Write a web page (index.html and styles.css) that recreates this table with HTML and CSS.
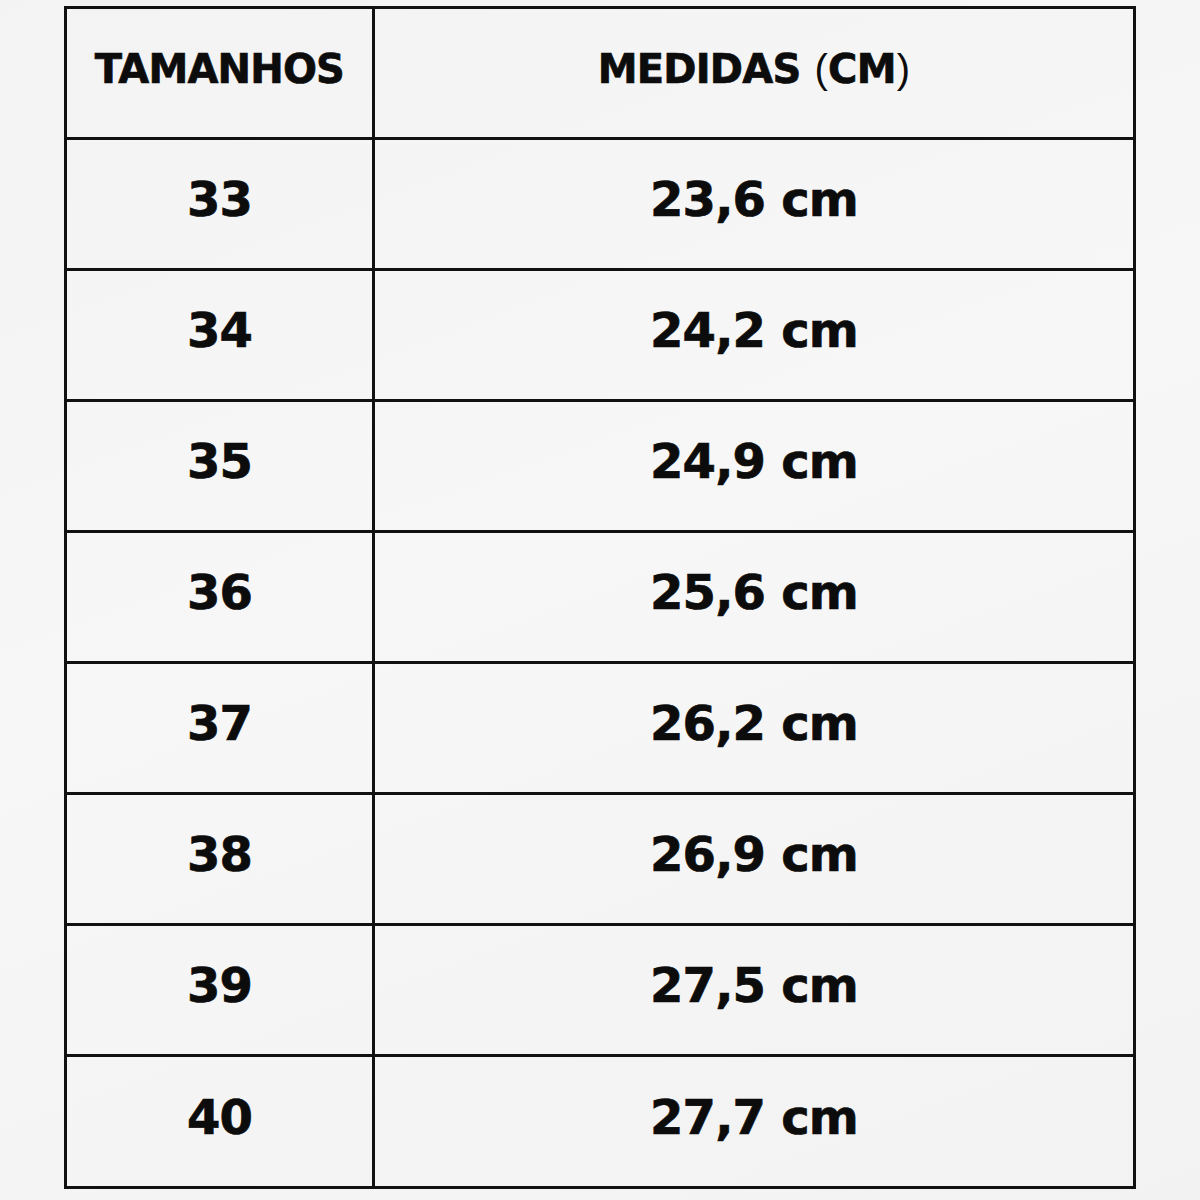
FILE: index.html
```html
<!DOCTYPE html>
<html lang="pt">
<head>
<meta charset="utf-8">
<title>Tabela de medidas</title>
<link rel="stylesheet" href="styles.css">
</head>
<body>
<div class="chart">
  <div class="cell head left"><span>TAMANHOS</span></div>
  <div class="cell head"><span>MEDIDAS <span class="paren">(</span>CM<span class="paren">)</span></span></div>
  <div class="cell left">33</div><div class="cell">23,6 cm</div>
  <div class="cell left">34</div><div class="cell">24,2 cm</div>
  <div class="cell left">35</div><div class="cell">24,9 cm</div>
  <div class="cell left">36</div><div class="cell">25,6 cm</div>
  <div class="cell left">37</div><div class="cell">26,2 cm</div>
  <div class="cell left">38</div><div class="cell">26,9 cm</div>
  <div class="cell left">39</div><div class="cell">27,5 cm</div>
  <div class="cell left last">40</div><div class="cell last">27,7 cm</div>
</div>
</body>
</html>
```
FILE: styles.css
```css
html, body {
  margin: 0;
  padding: 0;
}
body {
  width: 1200px;
  height: 1200px;
  background: linear-gradient(160deg, #f3f3f3 0%, #f7f7f7 45%, #f2f2f2 100%);
  font-family: "DejaVu Sans", "Liberation Sans", sans-serif;
  color: #0c0c0c;
  padding-top: 6px;
  box-sizing: border-box;
}
.chart {
  display: grid;
  grid-template-columns: 308px 758px;
  width: 1066px;
  margin-left: 64px;
  border: 3px solid #111;
}
.cell {
  display: flex;
  align-items: center;
  justify-content: center;
  font-weight: bold;
  font-size: 48px;
  padding-bottom: 10px;
  box-sizing: border-box;
  height: 131px;
  border-bottom: 3px solid #111;
  letter-spacing: -0.8px;
  -webkit-text-stroke: 0.7px #0c0c0c;
}
.cell.left {
  border-right: 3px solid #111;
}
.cell.last {
  border-bottom: none;
  height: 129px;
}
.head {
  font-size: 40px;
  letter-spacing: -0.8px;
  padding-bottom: 8px;
}
.paren {
  font-weight: normal;
  font-family: "Liberation Sans", sans-serif;
  -webkit-text-stroke: 0;
  margin: 0 1px;
}
```
